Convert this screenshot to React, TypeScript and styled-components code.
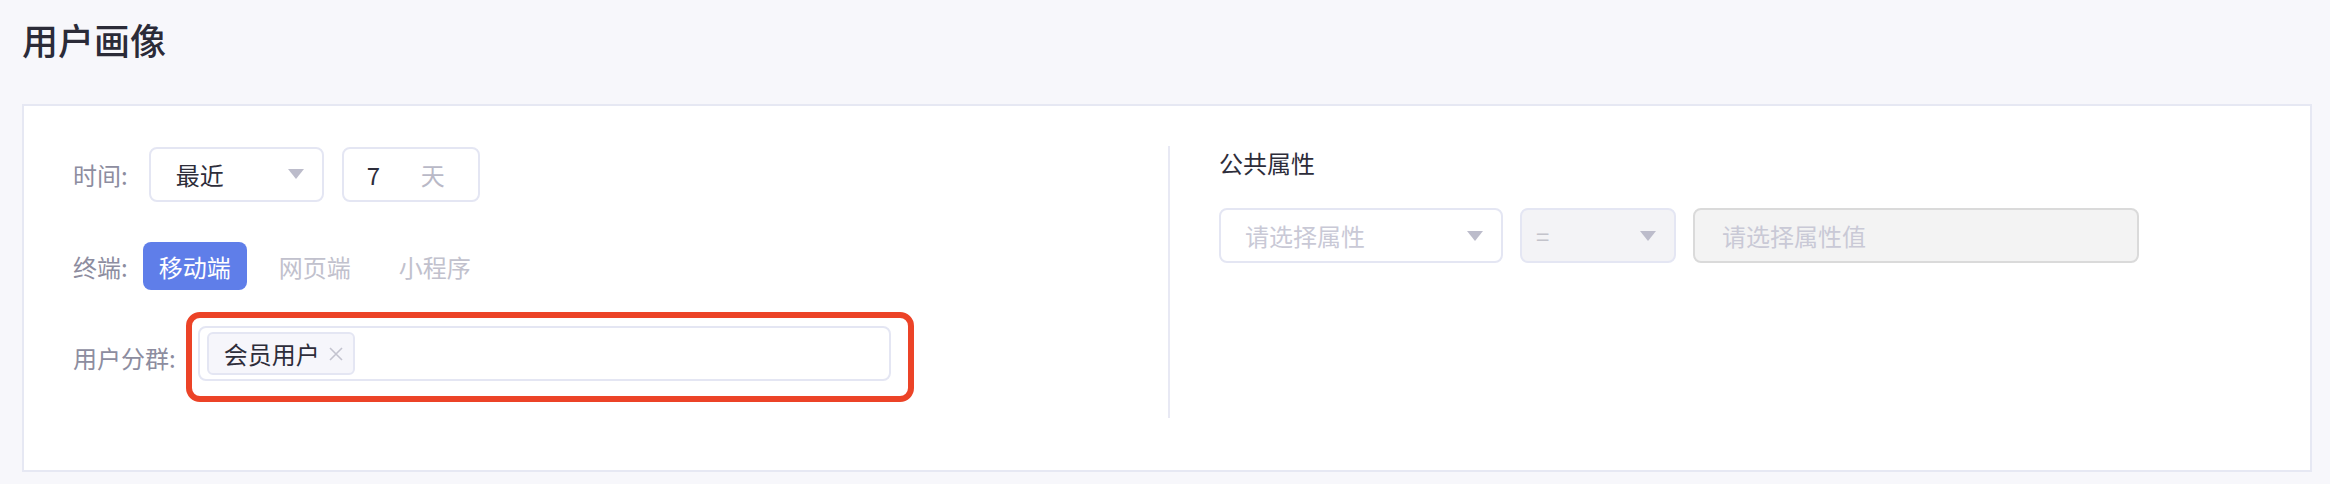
import React from 'react';
import styled, { createGlobalStyle } from 'styled-components';

const GlobalStyle = createGlobalStyle`
  html, body {
    margin: 0;
    padding: 0;
    background: #f7f7fb;
  }
  body {
    font-family: 'Noto Sans CJK SC', 'Noto Sans', sans-serif;
    color: #2d2d3a;
  }
`;

const Page = styled.div`
  padding: 15px 18px 0 22px;
`;

const Title = styled.h1`
  margin: 0;
  font-size: 36px;
  line-height: 48px;
  font-weight: 500;
  color: #2b2b38;
`;

const Card = styled.section`
  box-sizing: border-box;
  margin-top: 41px;
  height: 368px;
  background: #fff;
  border: 2px solid #e6e8f3;
  display: flex;
  padding: 40px 0 52px 49px;
`;

const LeftColumn = styled.div`
  width: 1095px;
  display: flex;
  flex-direction: column;
`;

const RightColumn = styled.div`
  flex: 1;
  border-left: 2px solid #e8e9f4;
  padding-left: 49px;
`;

const Row = styled.div<{ gap: number; top: number; height: number }>`
  display: flex;
  align-items: center;
  gap: ${p => p.gap}px;
  margin-top: ${p => p.top}px;
  height: ${p => p.height}px;
`;

const Label = styled.span`
  font-size: 24px;
  color: #8d8d9f;
  white-space: nowrap;
`;

const Controls = styled.div<{ gap: number }>`
  display: flex;
  gap: ${p => p.gap}px;
`;

const Field = styled.div<{ width: number; muted?: boolean; disabled?: boolean }>`
  box-sizing: border-box;
  width: ${p => p.width}px;
  height: 55px;
  display: flex;
  align-items: center;
  border: 2px solid ${p => (p.disabled ? '#dadada' : '#e4e6f3')};
  background: ${p => (p.disabled ? '#f3f3f3' : p.muted ? '#f3f3f6' : '#fff')};
  border-radius: 8px;
  font-size: 24px;
`;

const SelectField = styled(Field)<{ padLeft: number }>`
  justify-content: space-between;
  padding: 0 18px 0 ${p => p.padLeft}px;
`;

const Value = styled.span<{ tone?: 'dark' | 'placeholder' | 'symbol' }>`
  color: ${p =>
    p.tone === 'placeholder' ? '#c9c9d6' : p.tone === 'symbol' ? '#c3c3cb' : '#2d2d3a'};
`;

const NumberField = styled(Field)`
  justify-content: space-between;
  padding: 0 33px 0 23px;
`;

const Suffix = styled.span`
  color: #b9b9c7;
`;

const ValueField = styled(Field)`
  padding-left: 27px;
`;

const Segment = styled.button<{ active?: boolean }>`
  height: 48px;
  padding: 0 16px;
  border: none;
  border-radius: 8px;
  font-family: inherit;
  font-size: 24px;
  background: ${p => (p.active ? '#5f7ee9' : 'transparent')};
  color: ${p => (p.active ? '#fff' : '#c1c1cd')};
`;

const Highlight = styled.div`
  box-sizing: border-box;
  width: 728px;
  height: 90px;
  border: 6px solid #ec4327;
  border-radius: 14px;
  padding: 8px 17px 15px 6px;
`;

const TagInput = styled.div`
  box-sizing: border-box;
  height: 55px;
  border: 2px solid #e4e6f3;
  border-radius: 8px;
  display: flex;
  align-items: center;
  padding: 0 7px;
`;

const Tag = styled.span`
  box-sizing: border-box;
  height: 43px;
  display: inline-flex;
  align-items: center;
  gap: 9px;
  padding: 0 10px 0 15px;
  background: #f6f6fb;
  border: 2px solid #e4e6f3;
  border-radius: 6px;
  font-size: 24px;
  color: #2d2d3a;
`;

const SectionTitle = styled.h2`
  margin: 0;
  font-size: 24px;
  font-weight: 400;
  line-height: 34px;
  color: #2d2d3a;
`;

const FilterRow = styled.div`
  display: flex;
  gap: 17px;
  margin-top: 28px;
`;

const Arrow = () => (
  <svg width="16" height="10" viewBox="0 0 16 10">
    <polygon points="0,0 16,0 8,10" fill="#bcbccb" />
  </svg>
);

const Close = () => (
  <svg width="14" height="14" viewBox="0 0 14 14">
    <path d="M1 1 L13 13 M13 1 L1 13" stroke="#c3c3cf" strokeWidth="1.6" />
  </svg>
);

export default function App() {
  return (
    <>
      <GlobalStyle />
      <Page>
        <Title>用户画像</Title>
        <Card>
          <LeftColumn>
            <Row gap={21} top={1} height={54}>
              <Label>时间:</Label>
              <Controls gap={18}>
                <SelectField width={175} padLeft={25}>
                  <Value>最近</Value>
                  <Arrow />
                </SelectField>
                <NumberField width={138}>
                  <Value>7</Value>
                  <Suffix>天</Suffix>
                </NumberField>
              </Controls>
            </Row>
            <Row gap={15} top={41} height={48}>
              <Label>终端:</Label>
              <Controls gap={16}>
                <Segment active>移动端</Segment>
                <Segment>网页端</Segment>
                <Segment>小程序</Segment>
              </Controls>
            </Row>
            <Row gap={10} top={22} height={90}>
              <Label>用户分群:</Label>
              <Highlight>
                <TagInput>
                  <Tag>
                    会员用户
                    <Close />
                  </Tag>
                </TagInput>
              </Highlight>
            </Row>
          </LeftColumn>
          <RightColumn>
            <SectionTitle>公共属性</SectionTitle>
            <FilterRow>
              <SelectField width={284} padLeft={24}>
                <Value tone="placeholder">请选择属性</Value>
                <Arrow />
              </SelectField>
              <SelectField width={156} padLeft={14} muted>
                <Value tone="symbol">=</Value>
                <Arrow />
              </SelectField>
              <ValueField width={446} disabled>
                <Value tone="placeholder">请选择属性值</Value>
              </ValueField>
            </FilterRow>
          </RightColumn>
        </Card>
      </Page>
    </>
  );
}
